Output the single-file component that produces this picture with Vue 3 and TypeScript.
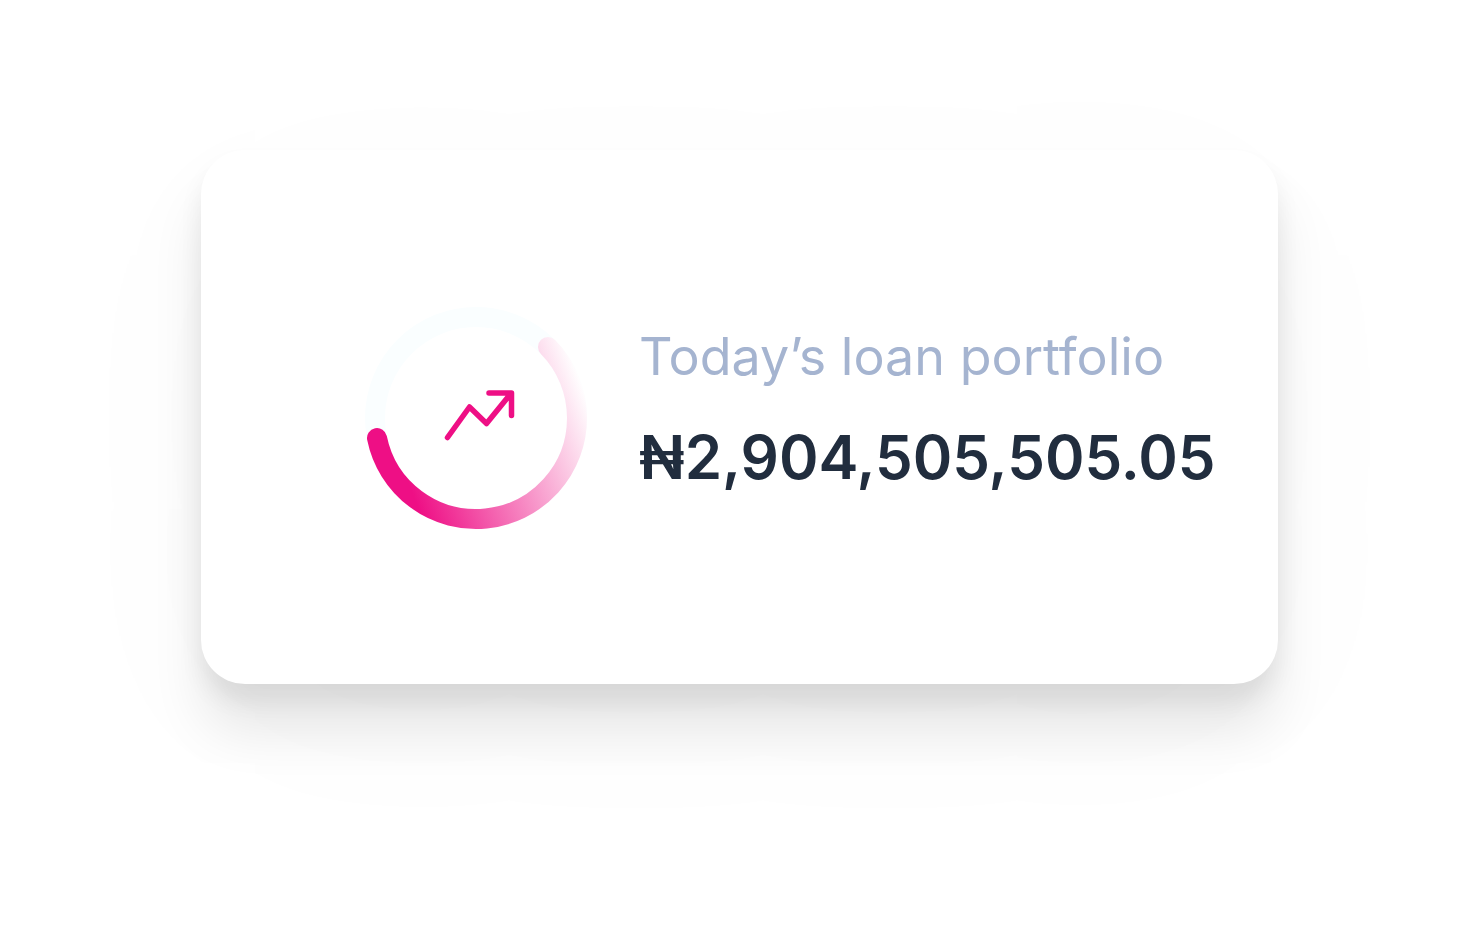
<script setup lang="ts">
interface PortfolioSummary {
  label: string
  amount: string
}

const summary: PortfolioSummary = {
  label: 'Today’s loan portfolio',
  amount: '₦2,904,505,505.05',
}
</script>

<template>
  <main class="page">
    <section class="card" aria-labelledby="portfolio-label">
      <svg class="ring" viewBox="0 0 224 224" fill="none" aria-hidden="true">
        <defs>
          <linearGradient id="ring-fade" gradientUnits="userSpaceOnUse" x1="32" y1="144" x2="217" y2="74">
            <stop offset="0" stop-color="#ee0f85" />
            <stop offset="1" stop-color="#ffffff" />
          </linearGradient>
        </defs>
        <circle cx="112" cy="112" r="101" stroke="#fafeff" stroke-width="20" />
        <path
          d="M13 132A101 101 0 0 0 213 112A101 101 0 0 0 184 41"
          stroke="url(#ring-fade)"
          stroke-width="20"
          stroke-linecap="round"
        />
        <path
          d="M83.500 131.500L105.500 101L122.500 117.500L146.500 88M125 87H147.500V109.500"
          stroke="#ee0f85"
          stroke-width="5.500"
          stroke-linecap="round"
          stroke-linejoin="round"
        />
      </svg>
      <div class="details">
        <h1 id="portfolio-label" class="label">{{ summary.label }}</h1>
        <p class="amount">{{ summary.amount }}</p>
      </div>
    </section>
  </main>
</template>

<style>
body {
  margin: 0;
  background: #fff;
}
</style>

<style scoped>
.page {
  box-sizing: border-box;
  min-height: 100vh;
  padding: 150px 200px 150px 201px;
  font-family: Inter, "Liberation Sans", sans-serif;
}

.card {
  display: flex;
  align-items: flex-start;
  gap: 51px;
  padding: 156px 60px 154px 163px;
  border-radius: 44px;
  background: #fff;
  box-shadow:
    0 40px 200px rgba(0, 0, 0, 0.024),
    0 48px 52px rgba(0, 0, 0, 0.09),
    0 16px 24px rgba(0, 0, 0, 0.065);
}

.ring {
  flex: none;
  width: 224px;
  height: 224px;
}

.details {
  padding-top: 19px;
  white-space: nowrap;
}

.label {
  margin: 0;
  color: #a5b4d0;
  font-size: 52px;
  font-weight: 400;
  line-height: 64px;
}

.amount {
  margin: 32px 0 0;
  color: #212d3e;
  font-size: 60px;
  font-weight: 600;
  line-height: 72px;
}
</style>
